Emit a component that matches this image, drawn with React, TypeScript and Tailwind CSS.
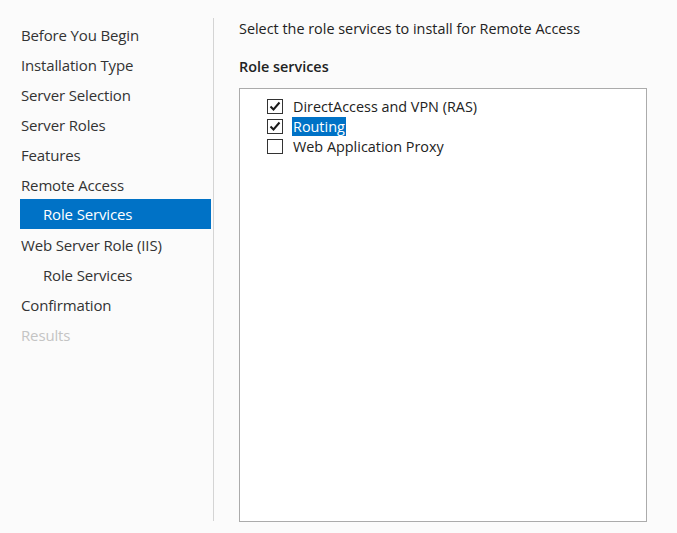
import React from "react";

const nav: { label: string; indent?: boolean; active?: boolean; disabled?: boolean }[] = [
  { label: "Before You Begin" },
  { label: "Installation Type" },
  { label: "Server Selection" },
  { label: "Server Roles" },
  { label: "Features" },
  { label: "Remote Access" },
  { label: "Role Services", indent: true, active: true },
  { label: "Web Server Role (IIS)" },
  { label: "Role Services", indent: true },
  { label: "Confirmation" },
  { label: "Results", disabled: true },
];

const Check = ({ checked }: { checked: boolean }) => (
  <div className="w-[16px] h-[15px] border border-[#333333] bg-white flex items-center justify-center shrink-0">
    {checked && (
      <svg width="12" height="11" viewBox="0 0 12 11">
        <path d="M1.5 5.5 L4.5 8.5 L10.5 1.5" fill="none" stroke="#1a1a1a" strokeWidth="2" />
      </svg>
    )}
  </div>
);

export default function App() {
  const font = { fontFamily: '"Open Sans", "Noto Sans", sans-serif' };
  return (
    <div className="w-[677px] h-[533px] bg-[#fbfbfb] flex text-[#333333]" style={font}>
      <div className="w-[213px] pt-[20px] pl-[20px] pr-[2px] flex flex-col">
        {nav.map((n, i) => (
          <div
            key={i}
            className={`h-[30px] flex items-center text-[15px] tracking-[-0.15px] ${n.indent ? "pl-[23px]" : "pl-[1px]"} ${
              n.active ? "bg-[#0072c6] text-white -mt-px mb-px" : n.disabled ? "text-[#c4c4c4]" : "text-[#333333]"
            }`}
          >
            {n.label}
          </div>
        ))}
      </div>
      <div className="w-px bg-[#d4d4d4] mt-[18px] mb-[12px]" />
      <div className="flex-1 flex flex-col pl-[25px] pr-[30px] pt-[19px] pb-[11px]">
        <div className="text-[14.4px] leading-[20px] text-[#222222]">
          Select the role services to install for Remote Access
        </div>
        <div className="mt-[18px] text-[14.4px] leading-[20px] font-semibold text-[#222222]">Role services</div>
        <div className="mt-[11px] flex-1 bg-white border border-[#ababab] pt-[7px] pl-[27px] flex flex-col">
          {[
            { t: "DirectAccess and VPN (RAS)", c: true },
            { t: "Routing", c: true, sel: true },
            { t: "Web Application Proxy", c: false },
          ].map((r, i) => (
            <div key={i} className="h-[20px] flex items-center gap-[9px]">
              <Check checked={r.c} />
              <span
                className={`text-[14.4px] leading-[19px] px-px ${
                  r.sel ? "bg-[#0072c6] text-white" : "text-[#222222]"
                }`}
              >
                {r.t}
              </span>
            </div>
          ))}
        </div>
      </div>
    </div>
  );
}
